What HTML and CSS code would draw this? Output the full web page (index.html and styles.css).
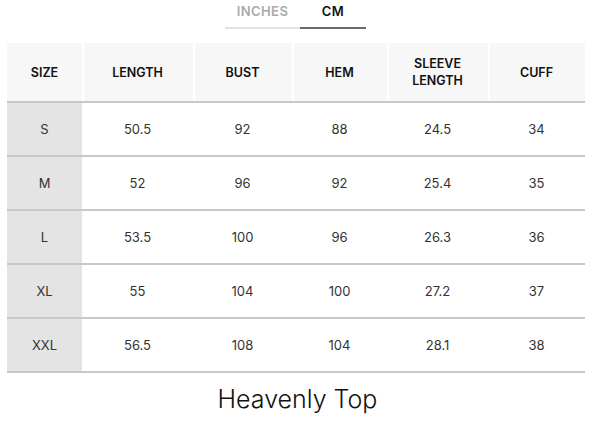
FILE: index.html
```html
<!DOCTYPE html>
<html>
<head>
<meta charset="utf-8">
<link rel="stylesheet" href="styles.css">
</head>
<body>
<div class="tabs">
  <div class="tab">INCHES</div>
  <div class="tab active">CM</div>
</div>
<table class="chart">
  <colgroup>
    <col class="c-size"><col class="c-len"><col class="c-bust"><col class="c-hem"><col class="c-sleeve"><col class="c-cuff">
  </colgroup>
  <thead>
    <tr>
      <th>SIZE</th>
      <th>LENGTH</th>
      <th>BUST</th>
      <th>HEM</th>
      <th>SLEEVE<br>LENGTH</th>
      <th>CUFF</th>
    </tr>
  </thead>
  <tbody>
    <tr><td class="size">S</td><td>50.5</td><td>92</td><td>88</td><td>24.5</td><td>34</td></tr>
    <tr><td class="size">M</td><td>52</td><td>96</td><td>92</td><td>25.4</td><td>35</td></tr>
    <tr><td class="size">L</td><td>53.5</td><td>100</td><td>96</td><td>26.3</td><td>36</td></tr>
    <tr><td class="size">XL</td><td>55</td><td>104</td><td>100</td><td>27.2</td><td>37</td></tr>
    <tr><td class="size">XXL</td><td>56.5</td><td>108</td><td>104</td><td>28.1</td><td>38</td></tr>
  </tbody>
</table>
<div class="title">Heavenly Top</div>
</body>
</html>
```
FILE: styles.css
```css
html, body {
  margin: 0;
  padding: 0;
  background: #fff;
}
body {
  font-family: "Inter", "Liberation Sans", sans-serif;
  color: #222;
}
.tabs {
  display: flex;
  justify-content: center;
  padding-top: 3px;
  margin-left: -2px;
}
.tab {
  width: 75px;
  text-align: center;
  font-size: 13px;
  font-weight: 600;
  letter-spacing: 0.4px;
  color: #aaa;
  padding-bottom: 7px;
  border-bottom: 2px solid #e2e2e2;
  line-height: 17px;
}
.tab.active {
  width: 66px;
  color: #111;
  border-bottom-color: #6a6a6a;
}
.chart {
  margin: 14px 0 0 7px;
  width: 578px;
  border-collapse: collapse;
  table-layout: fixed;
}
.c-size { width: 75px; }
.c-len { width: 111px; }
.c-bust { width: 99px; }
.c-hem { width: 95px; }
.c-sleeve { width: 101px; }
.c-cuff { width: 97px; }
.chart th {
  background: #f7f7f7;
  font-size: 12.5px;
  font-weight: 600;
  color: #111;
  height: 58px;
  padding: 0;
  line-height: 17px;
  box-shadow: inset 2px 0 0 #fff;
  border-bottom: 2px solid #c5c9cc;
  text-align: center;
}
.chart th:first-child { box-shadow: none; }
.chart td {
  height: 52px;
  padding: 0;
  text-align: center;
  font-size: 13px;
  color: #333;
  border-bottom: 2px solid #c5c9cc;
}
.chart td.size {
  background: #e4e4e4;
}
.title {
  text-align: center;
  font-size: 25px;
  font-weight: 300;
  color: #111;
  margin-top: 11px;
  margin-left: 2px;
}
```
